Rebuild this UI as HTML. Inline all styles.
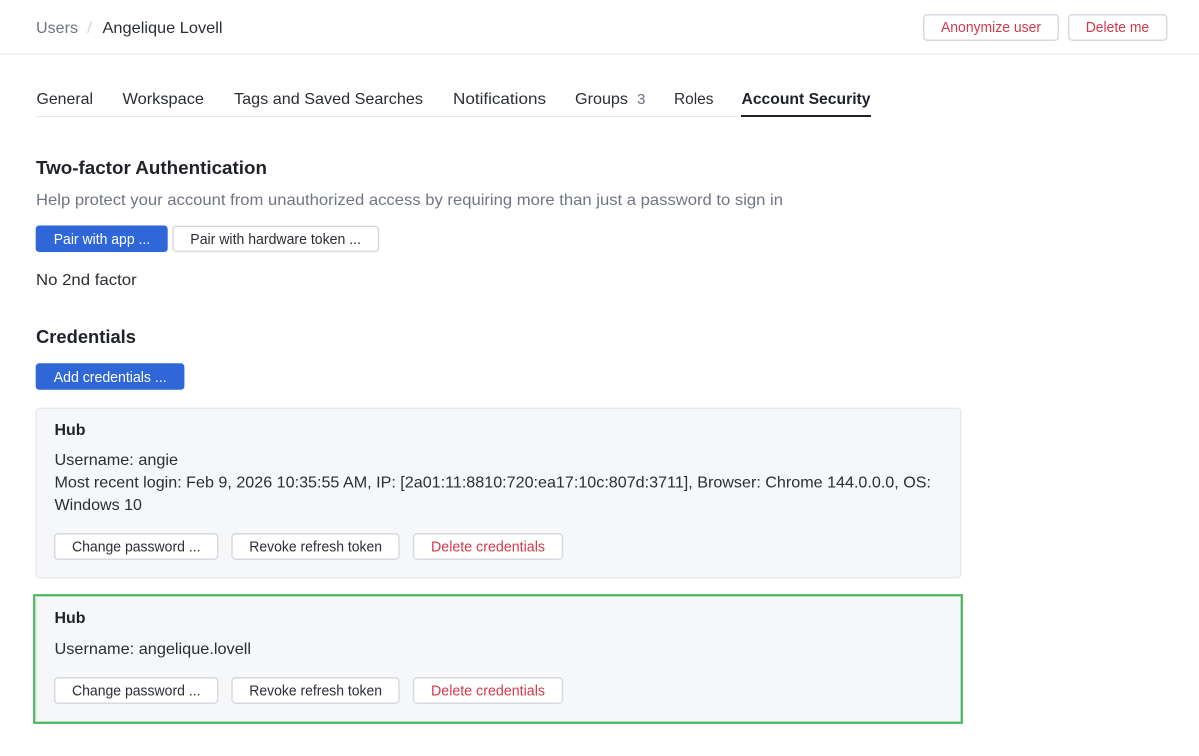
<!DOCTYPE html>
<html lang="en">
<head>
<meta charset="utf-8">
<title>Angelique Lovell - Account Security</title>
<style>
html,body{margin:0;padding:0;background:#fff;width:1199px;height:756px;overflow:hidden}
svg{display:block}
text{font-family:"Liberation Sans",Arial,sans-serif;font-size:16px;fill:#2a2e34}
.s{font-size:14.5px}
.g{fill:#6f7583}
.b{font-weight:700}
.h{font-weight:700;font-size:18.5px;fill:#1f2329}
.hub{font-weight:700;font-size:15.5px;fill:#1f2329}
.r{fill:#d23a4c}
.w{fill:#fff}
.btn{fill:#fff;stroke:#d8d9e0;stroke-width:1.5}
.pri{fill:#3067d8}
</style>
</head>
<body>
<svg width="1199" height="756" viewBox="0 0 1199 756" xmlns="http://www.w3.org/2000/svg">
<rect width="1199" height="756" fill="#fff"/>

<!-- header -->
<text x="36" y="33" class="g" textLength="42" lengthAdjust="spacingAndGlyphs">Users</text>
<text x="87" y="33" style="fill:#d5d7de" textLength="5" lengthAdjust="spacingAndGlyphs">/</text>
<text x="102.5" y="33" textLength="120" lengthAdjust="spacingAndGlyphs">Angelique Lovell</text>
<rect x="923.7" y="14.7" width="134.6" height="25.6" rx="3.5" class="btn"/>
<text x="941" y="32" class="s r" textLength="100" lengthAdjust="spacingAndGlyphs">Anonymize user</text>
<rect x="1068.7" y="14.7" width="98" height="25.6" rx="3.5" class="btn"/>
<text x="1085.7" y="32" class="s r" textLength="63.5" lengthAdjust="spacingAndGlyphs">Delete me</text>
<rect x="0" y="53.5" width="1199" height="1.2" fill="#e6e7ec"/>

<!-- tabs -->
<text x="36.5" y="104" textLength="56.5" lengthAdjust="spacingAndGlyphs">General</text>
<text x="122.5" y="104" textLength="81.5" lengthAdjust="spacingAndGlyphs">Workspace</text>
<text x="234" y="104" textLength="189" lengthAdjust="spacingAndGlyphs">Tags and Saved Searches</text>
<text x="453" y="104" textLength="93" lengthAdjust="spacingAndGlyphs">Notifications</text>
<text x="575" y="104" textLength="53" lengthAdjust="spacingAndGlyphs">Groups</text>
<text x="637" y="104" class="s g" textLength="8.5" lengthAdjust="spacingAndGlyphs">3</text>
<text x="674" y="104" textLength="39.5" lengthAdjust="spacingAndGlyphs">Roles</text>
<text x="741.5" y="104" class="b" style="fill:#1f2329" textLength="129" lengthAdjust="spacingAndGlyphs">Account Security</text>
<rect x="36" y="116" width="835" height="1" fill="#e6e7ec"/>
<rect x="741" y="115" width="130" height="2" fill="#1f2329"/>

<!-- two-factor -->
<text x="36" y="174" class="h" textLength="231" lengthAdjust="spacingAndGlyphs">Two-factor Authentication</text>
<text x="36" y="205" class="g" textLength="747" lengthAdjust="spacingAndGlyphs">Help protect your account from unauthorized access by requiring more than just a password to sign in</text>
<rect x="35.7" y="225.5" width="132" height="26.5" rx="3.5" class="pri"/>
<text x="53.7" y="244" class="s w" textLength="96.5" lengthAdjust="spacingAndGlyphs">Pair with app ...</text>
<rect x="172.9" y="226.2" width="205.6" height="25.2" rx="3.5" class="btn"/>
<text x="190.3" y="244" class="s" textLength="170.7" lengthAdjust="spacingAndGlyphs">Pair with hardware token ...</text>
<text x="36" y="285" textLength="100.7" lengthAdjust="spacingAndGlyphs">No 2nd factor</text>

<!-- credentials -->
<text x="36" y="343" class="h" textLength="100" lengthAdjust="spacingAndGlyphs">Credentials</text>
<rect x="35.7" y="363.3" width="148.7" height="26.5" rx="3.5" class="pri"/>
<text x="53.7" y="382" class="s w" textLength="113" lengthAdjust="spacingAndGlyphs">Add credentials ...</text>

<!-- card 1 -->
<rect x="36.2" y="408.2" width="924.6" height="169.6" rx="3.5" fill="#f6f7f9" stroke="#e4e5ea" stroke-width="1.2"/>
<text x="54.5" y="435" class="hub" textLength="31" lengthAdjust="spacingAndGlyphs">Hub</text>
<text x="54.5" y="465" textLength="123.5" lengthAdjust="spacingAndGlyphs">Username: angie</text>
<text x="54.5" y="487.5" textLength="876.5" lengthAdjust="spacingAndGlyphs">Most recent login: Feb 9, 2026 10:35:55 AM, IP: [2a01:11:8810:720:ea17:10c:807d:3711], Browser: Chrome 144.0.0.0, OS:</text>
<text x="54.5" y="510" textLength="87.5" lengthAdjust="spacingAndGlyphs">Windows 10</text>
<rect x="54.7" y="533.7" width="163" height="25.6" rx="3.5" class="btn"/>
<text x="72" y="551.5" class="s" textLength="128.5" lengthAdjust="spacingAndGlyphs">Change password ...</text>
<rect x="232" y="533.7" width="167" height="25.6" rx="3.5" class="btn"/>
<text x="249.3" y="551.5" class="s" textLength="132.7" lengthAdjust="spacingAndGlyphs">Revoke refresh token</text>
<rect x="413.5" y="533.7" width="149" height="25.6" rx="3.5" class="btn"/>
<text x="431" y="551.5" class="s r" textLength="114" lengthAdjust="spacingAndGlyphs">Delete credentials</text>

<!-- card 2 -->
<rect x="36.2" y="596.2" width="924.6" height="125.6" rx="3.5" fill="#f6f7f9" stroke="#e4e5ea" stroke-width="1.2"/>
<rect x="34.2" y="595.2" width="927.6" height="127.6" fill="none" stroke="#4cb862" stroke-width="2.2"/>
<text x="54.5" y="623" class="hub" textLength="31" lengthAdjust="spacingAndGlyphs">Hub</text>
<text x="54.5" y="654" textLength="196.5" lengthAdjust="spacingAndGlyphs">Username: angelique.lovell</text>
<rect x="54.7" y="677.7" width="163" height="25.6" rx="3.5" class="btn"/>
<text x="72" y="695.5" class="s" textLength="128.5" lengthAdjust="spacingAndGlyphs">Change password ...</text>
<rect x="232" y="677.7" width="167" height="25.6" rx="3.5" class="btn"/>
<text x="249.3" y="695.5" class="s" textLength="132.7" lengthAdjust="spacingAndGlyphs">Revoke refresh token</text>
<rect x="413.5" y="677.7" width="149" height="25.6" rx="3.5" class="btn"/>
<text x="431" y="695.5" class="s r" textLength="114" lengthAdjust="spacingAndGlyphs">Delete credentials</text>
</svg>
</body>
</html>
